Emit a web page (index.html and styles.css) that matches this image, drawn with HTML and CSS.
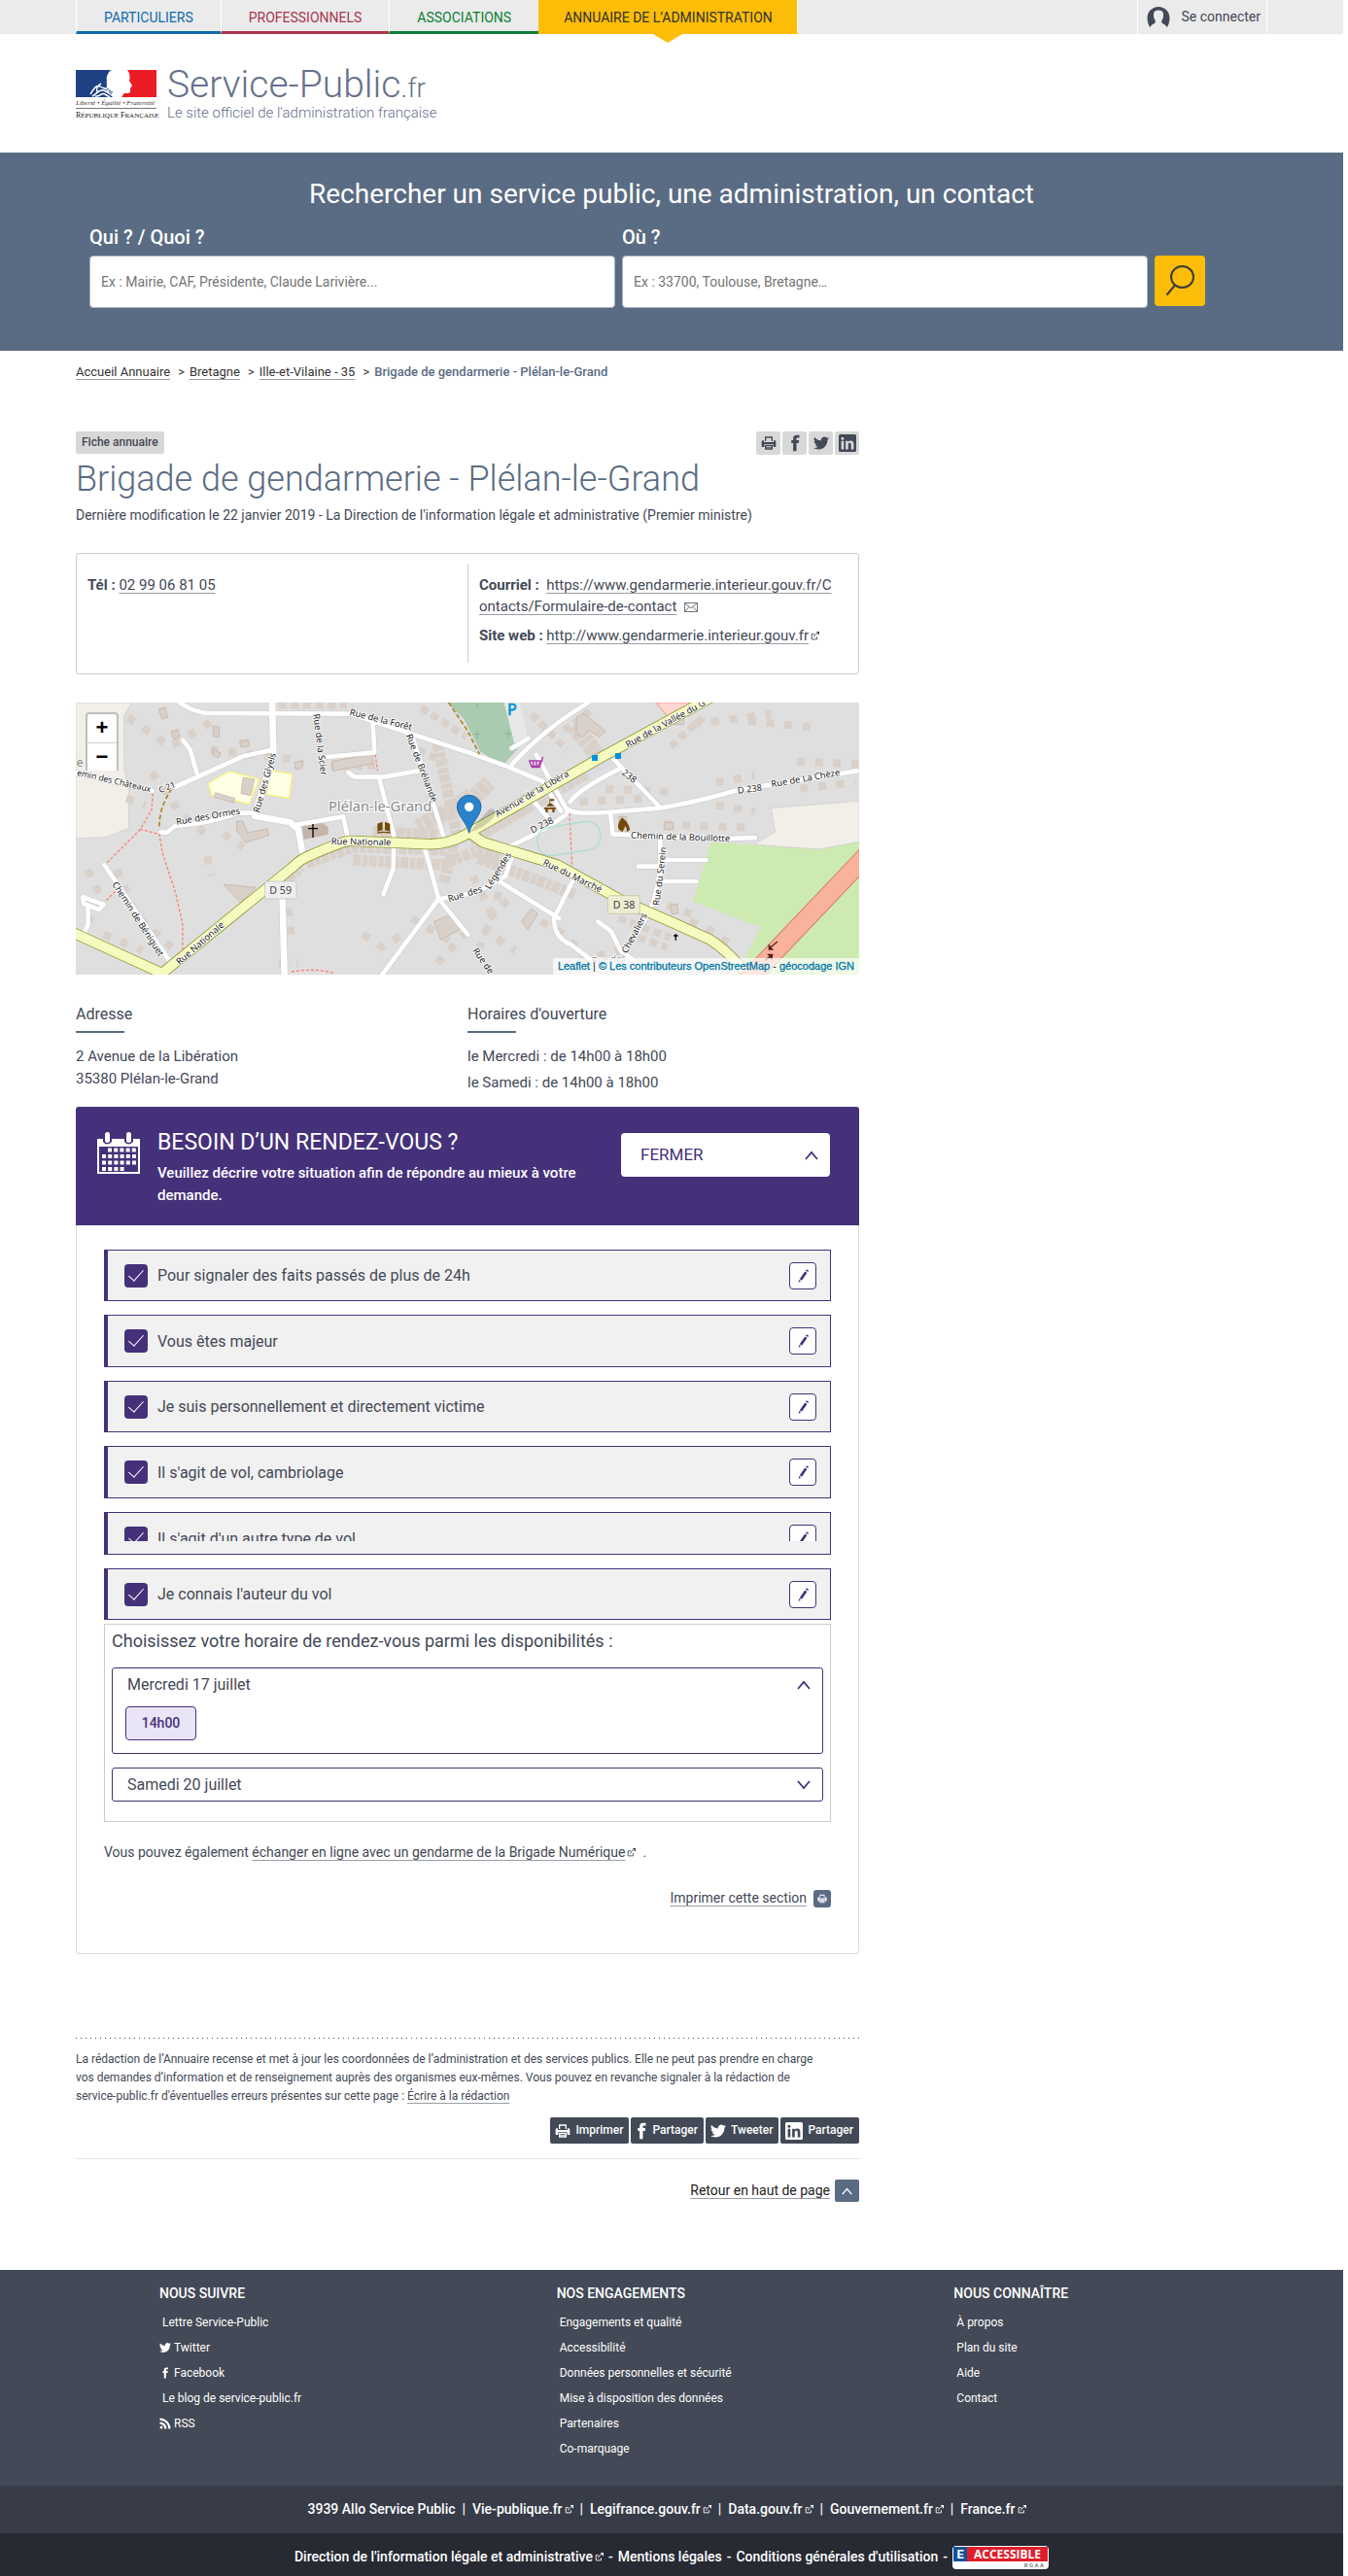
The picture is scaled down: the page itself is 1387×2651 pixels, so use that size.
FILE: index.html
```html
<!DOCTYPE html>
<html lang="fr">
<head>
<meta charset="utf-8">
<title>Brigade de gendarmerie - Plélan-le-Grand | Service-Public.fr</title>
<meta name="viewport" content="width=device-width, initial-scale=1">
<link rel="stylesheet" href="styles.css">
</head>
<body>
<svg class="sprite" aria-hidden="true">
  <symbol id="i-print" viewBox="0 0 24 24"><path fill-rule="evenodd" d="M6 9V2h12v7h-2V4H8v5zM3 8h1.500v2.500h15V8H21a2 2 0 0 1 2 2v8h-4v-4H5v4H1v-8a2 2 0 0 1 2-2zM6 15h12v7H6zm2 1.500v1h8v-1zm0 2.500v1h8v-1z"/></symbol>
  <symbol id="i-fb" viewBox="0 0 24 24"><path d="M14 8V6c0-.9.2-1.400 1.400-1.400H18V1h-3.700C10.800 1 9.500 2.800 9.500 5.700V8H7v4h2.500v11H14V12h3l.5-4z"/></symbol>
  <symbol id="i-tw" viewBox="0 0 24 24"><path d="M23.950 4.570a10 10 0 0 1-2.820.77 4.960 4.960 0 0 0 2.160-2.720c-.95.55-2 .95-3.120 1.180a4.920 4.920 0 0 0-8.380 4.480C7.690 8.100 4.070 6.130 1.640 3.160a4.920 4.920 0 0 0 1.520 6.570 4.900 4.900 0 0 1-2.230-.61v.06a4.920 4.920 0 0 0 3.950 4.830 5 5 0 0 1-2.210.08 4.940 4.940 0 0 0 4.600 3.420A9.870 9.870 0 0 1 0 19.540a13.990 13.990 0 0 0 7.550 2.210c9.050 0 14-7.500 14-13.980 0-.21 0-.42-.02-.63a9.940 9.940 0 0 0 2.460-2.550z"/></symbol>
  <symbol id="i-in" viewBox="0 0 24 24"><path fill-rule="evenodd" d="M2 0h20a2 2 0 0 1 2 2v20a2 2 0 0 1-2 2H2a2 2 0 0 1-2-2V2a2 2 0 0 1 2-2zM3.500 9v11.500H7V9zM5.250 3.500a2 2 0 1 0 0 4 2 2 0 0 0 0-4zM9.500 9v11.500H13V14c0-3 4-3.200 4 0v6.500h3.500V13c0-5-5.500-5.300-7.500-2.400V9z"/></symbol>
  <symbol id="i-rss" viewBox="0 0 24 24"><path d="M1 1v4.500c10 0 17.500 7.500 17.500 17.500H23C23 11 13 1 1 1zm0 8v4.500c5.500 0 9.500 4 9.500 9.500H15C15 15 9 9 1 9z"/><circle cx="4" cy="20" r="3"/></symbol>
  <symbol id="i-ext" viewBox="0 0 12 12"><path fill="none" stroke="currentColor" stroke-width="1.200" d="M5 3.500H1.600v7h7V7M5 7.500c0-3 2-4.500 4-4.500"/><path d="M7.500 0H12v5z"/></symbol>
  <symbol id="i-up" viewBox="0 0 14 10"><path fill="none" stroke="currentColor" stroke-width="1.800" d="M1 9l6-7 6 7"/></symbol>
  <symbol id="i-down" viewBox="0 0 14 10"><path fill="none" stroke="currentColor" stroke-width="1.800" d="M1 1l6 7 6-7"/></symbol>
  <symbol id="i-pen" viewBox="0 0 16 16"><path d="M10.200 3.600l2.200 1.500-5.400 7.600-2.200-1.500zM11 2.500l.9-1.300 2.200 1.500-.9 1.300zM4.300 12l1.700 1.200-2.400 1.700z"/></symbol>
</svg>

<div class="topbar">
  <div class="wrap topbar-in">
    <nav class="tabs" aria-label="Espaces">
      <a class="tab blue" href="#">PARTICULIERS</a>
      <a class="tab red" href="#">PROFESSIONNELS</a>
      <a class="tab green" href="#">ASSOCIATIONS</a>
      <a class="tab current" href="#">ANNUAIRE DE L’ADMINISTRATION</a>
    </nav>
    <a class="login" href="#"><svg width="24" height="22" viewBox="0 0 24 22" aria-hidden="true"><path fill-rule="evenodd" d="M12 0C5.500 0 .5 5 .5 11.500c0 3.800 1 7 3 10 0-2.500 2.500-3.300 5.200-5V14C7 12 7 9.500 7 7.500 7 5 9 3.500 12 3.500S17 5 17 7.500s0 4.500-1.700 6.500v2.500c2.700 1.700 5.200 2.500 5.200 5 2-3 3-6.200 3-10C23.500 5 18.500 0 12 0z"/></svg>Se connecter</a>
  </div>
</div>

<header class="wrap brand">
  <svg width="84" height="52" viewBox="0 0 84 52" role="img" aria-label="République Française">
    <path fill="#1f4283" d="M0 0h36c-3 3-5 7-4 11-1 3 1 5-1 8 2 1 1 4 3 5l4 4H0z"/>
    <path fill="#ec1c27" d="M53 0h30v28H47c2-2 1-4 5-4 5 0 4-2 4-5l2-3-3-5c1-3 1-7-2-11z"/>
    <path fill="none" stroke="#fff" stroke-width="1.500" d="M15 25c4-7 7-10 10-8s7 2 12 5M17 27c5-3 8-8 12-6l9 5M20 27c5 1 6-4 10-2l5 3M26 14c-4 2-5 6-4 9"/>
    <path fill="none" stroke="#1f4283" d="M32 19c2 1 3 3 6 4M34 22l3 3"/>
    <path fill="none" stroke="#777" d="M0 39.500h83"/>
    <text class="motto" x="0" y="36">Liberté • Égalité • Fraternité</text>
    <text class="rf" x="0" y="49"><tspan class="rf-cap">R</tspan>ÉPUBLIQUE <tspan class="rf-cap">F</tspan>RANÇAISE</text>
  </svg>
  <a class="brand-text" href="#"><span class="brand-name">Service-Public<small>.fr</small></span><span class="brand-tag">Le site officiel de l'administration française</span></a>
</header>

<section class="search">
  <form class="wrap search-in">
    <h2>Rechercher un service public, une administration, un contact</h2>
    <div class="fields">
      <div class="field"><label for="who">Qui ? / Quoi ?</label><input id="who" type="text" placeholder="Ex : Mairie, CAF, Présidente, Claude Larivière..."></div>
      <div class="field"><label for="where">Où ?</label><input id="where" type="text" placeholder="Ex : 33700, Toulouse, Bretagne…"></div>
      <button class="go" type="button" aria-label="Rechercher"><svg width="30" height="32" viewBox="0 0 30 32" aria-hidden="true"><ellipse cx="17.500" cy="12" rx="11.500" ry="11" /><path d="M10 20.500L1.500 30.500"/></svg></button>
    </div>
  </form>
</section>

<div class="wrap">
  <nav class="crumbs" aria-label="Fil d’Ariane"><a href="#">Accueil Annuaire</a><span>&gt;</span><a href="#">Bretagne</a><span>&gt;</span><a href="#">Ille-et-Vilaine - 35</a><span>&gt;</span><strong>Brigade de gendarmerie - Plélan-le-Grand</strong></nav>

  <main class="main">
    <div class="tools">
      <span class="badge">Fiche annuaire</span>
      <div class="icons">
        <button type="button" aria-label="Imprimer"><svg class="s16"><use href="#i-print"/></svg></button>
        <button type="button" aria-label="Facebook"><svg class="s18"><use href="#i-fb"/></svg></button>
        <button type="button" aria-label="Twitter"><svg class="s16"><use href="#i-tw"/></svg></button>
        <button type="button" aria-label="LinkedIn"><svg class="s18"><use href="#i-in"/></svg></button>
      </div>
    </div>
    <h1>Brigade de gendarmerie - Plélan-le-Grand</h1>
    <p class="updated">Dernière modification le 22 janvier 2019 - La Direction de l'information légale et administrative (Premier ministre)</p>

    <section class="contact">
      <div><p><b>Tél :</b> <a href="#">02 99 06 81 05</a></p></div>
      <div>
        <p><b>Courriel :</b>&nbsp; <a class="url" href="#">https://www.gendarmerie.interieur.gouv.fr/Contacts/Formulaire-de-contact</a>&nbsp; <svg class="mail" width="14" height="10" viewBox="0 0 14 10" aria-hidden="true"><path d="M.5.500h13v9H.5zl6.500 5.500L13.500.500M.5 9.500L5 4.500M13.500 9.500L9 4.500"/></svg></p>
        <p><b>Site web :</b> <a href="#">http://www.gendarmerie.interieur.gouv.fr</a><svg class="ext"><use href="#i-ext"/></svg></p>
      </div>
    </section>

    <div class="map">
      <svg class="map-art" viewBox="24 24 2418 840" preserveAspectRatio="xMidYMid slice" role="img" aria-label="Carte de Plélan-le-Grand">
        <rect x="24" y="24" width="2418" height="840" fill="#dfdfdf"/>
        <path fill="#f2efe9" stroke="#ccc" stroke-width="2" d="M24 24h172l-24 42 2 168 14 60v118l-74 28-90 4z"/>
        <path fill="#ffffe5" stroke="#f5f080" stroke-width="4" d="M432 273l66-37 92 24-30 78-117-26zM624 234l68 10-9 76-70-12z"/>
        <path fill="#aacbaf" d="M1170 24h176l42 143-46 51-70-44-50-100z"/>
        <path fill="#e8e8e8" d="M1346 24h46l18 60 10 60-18 18-24-10z"/>
        <path fill="#cdebb0" d="M1985 455l340 22 117-24v411h-380l78-146-210-80z"/>
        <path fill="#f2efe9" stroke="#ccc" stroke-width="2" d="M2170 350l272-22v126l-125 23-200-15 66-38z"/>
        <path fill="#ffd6d1" stroke="#f5aca6" stroke-width="4" d="M1815 24l40 48 90-48z"/>
        <path fill="#dadbe4" d="M1110 478l180-65 420-240 8 18-420 245-180 65z"/>
        <g fill="none" stroke="#d9d0c9" stroke-width="34">
          <path stroke-dasharray="24 5 16 4" d="M735 520l150-50 280 10M880 510l275 15 120-50M1240 450l100-55 260-150M1265 505l170 62 130 50M1160 580l30-120M1140 150l60 280M640 600l80-70"/>
          <path stroke-dasharray="18 4 26 3" stroke-width="50" d="M1080 410l110-60 55-40M1220 350l80-80M1560 95l90 110M1300 400l110-60M940 430l200 10M1265 480l70 30"/>
          <path stroke-dasharray="24 14" stroke-width="22" d="M650 32h210M1430 60l110 110M1530 110l80-60M1760 750l90 30M1700 690l160 60M1860 160l100-90M1080 170l90 40M810 220h140M1090 40l140 90"/>
        </g>
        <g fill="none" stroke="#d9d0c9">
          <path stroke-width="24" stroke-dasharray="24 32" d="M185 70l130 90 150-90M440 170l260 30M260 240l90 130 90 70M180 320l60 20M150 540l60 140 110 100M60 540l50 100-50 60M110 740l120 50M480 430l60 40M430 500l10 60M680 660l10 110M650 830h60M910 740l60 40 80-50M1060 690l120 70M1140 830l100-110M1250 560l60 120-40 100M1330 610l-40 120 90 60M1460 700l70 40 60 60M1580 820l120-30M1580 330l200-10M1660 290l220 10M1840 400l250 10M2000 340l120 20M2000 270l120-20M2260 290l170-20M2250 205l190 10M1930 90l240-30M2100 80l190 20M1850 650l80 30M1920 700l50 20 90 60M1300 690l60-60"/>
        </g>
        <path fill="#d9d0c9" stroke="#bfaea0" stroke-width="2" d="M280 45l20-7 8 32-18 5zM318 115l20-8 8 22-20 8zM448 96l18 3 0 32-18-2zM448 168l24 12-8 14-18-8zM530 142l26-3 4 20-26 3zM698 208l28-5-4 24-20 4zM540 255l36 6-12 50-30-6zM455 302l60 18-4 14-60-18zM520 390l20 0 14 36 60-12 6 20-72 22-28-38zM480 585l100 10-48 46zM815 205l125-22 2 30-124 22zM1570 68l24-10 66 56-20 16-32-20-20 20-20-10zM1870 66h30v26h-30zM1860 650l20-4 4 28-20 4zM1400 700l30-40 20 15-30 50zM1130 700l60-25 20 50-60 30zM1700 376h24v48h-24zM1840 394h28v22h-28z"/>
        <path fill="#c4b5ab" d="M722 400l60-8 22 18-2 22-76 15z"/>
        <g fill="none" stroke="#c7c7c7" stroke-linejoin="round" stroke-linecap="round">
          <path stroke-width="23" d="M630 24l4 160-58 190M576 374l110 20 24 20 14 74M662 630l6 240"/>
          <path stroke-width="17" d="M344 24q50 32 90 33l440 2 370 122 110 40 110 46 58 92M330 285l210-95 90-20M260 297l-236-56M285 425h20l26-20q120-10 190-40h55M355 140l22 30 20 70M940 70l6 110M796 192l150-14M710 400l140-24 12 60M1060 120l100 320M960 255l46 180-2 100-30 80M865 240l20 14 90 0 110-20M1100 470l44 160 90 110M1144 630l-175 235M112 525l210 310M45 625l65 22-14 16-48-18zM62 650v60l-15 30"/>
          <path stroke-width="17" d="M1370 215q100-110 235-190M1370 165l50-30M1360 470q110-50 185-105l-100-180M1430 320l60 70M1545 355q20 15 120 8l160-13q100-15 240-55l370-60M1685 200l140 145M1550 330q30-40 150-100M1675 370l6 60 330 15 110-4M1828 445v60q0 90-36 170l-30 50M1840 510h130M1760 530h68M1840 576h100M1330 575l185 115M1560 570l-60 120q0 60 50 80l80 60M1636 700l40 30 30 60 110 80M1370 500l-20 60-90 50-110 20"/>
        </g>
        <g fill="none" stroke="#fff" stroke-linejoin="round" stroke-linecap="round">
          <path stroke-width="20" d="M630 24l4 160-58 190M576 374l110 20 24 20 14 74M662 630l6 240"/>
          <path stroke-width="14" d="M344 24q50 32 90 33l440 2 370 122 110 40 110 46 58 92M330 285l210-95 90-20M260 297l-236-56M285 425h20l26-20q120-10 190-40h55M355 140l22 30 20 70M940 70l6 110M796 192l150-14M710 400l140-24 12 60M1060 120l100 320M960 255l46 180-2 100-30 80M865 240l20 14 90 0 110-20M1100 470l44 160 90 110M1144 630l-175 235M112 525l210 310M45 625l65 22-14 16-48-18zM62 650v60l-15 30"/>
          <path stroke-width="14" d="M1370 215q100-110 235-190M1370 165l50-30M1360 470q110-50 185-105l-100-180M1430 320l60 70M1545 355q20 15 120 8l160-13q100-15 240-55l370-60M1685 200l140 145M1550 330q30-40 150-100M1675 370l6 60 330 15 110-4M1828 445v60q0 90-36 170l-30 50M1840 510h130M1760 530h68M1840 576h100M1330 575l185 115M1560 570l-60 120q0 60 50 80l80 60M1636 700l40 30 30 60 110 80M1370 500l-20 60-90 50-110 20"/>
        </g>
        <g fill="none" stroke-linejoin="round">
          <path stroke="#8f9a3a" stroke-width="34" d="M10 732l280 128 400-325q30-30 60-40 90-40 120-44l240 10q60 2 110-25l430-245L2000 0M1238 425l42 30 230 70 200 110 160 70 110 50q50 30 110 100"/>
          <path stroke="#f7fabf" stroke-width="29" d="M10 732l280 128 400-325q30-30 60-40 90-40 120-44l240 10q60 2 110-25l430-245L2000 0M1238 425l42 30 230 70 200 110 160 70 110 50q50 30 110 100"/>
          <path stroke="#d97a68" stroke-width="60" d="M2470 490l-380 400"/><path stroke="#f9b29c" stroke-width="54" d="M2470 490l-380 400"/>
          <path stroke="#fa8072" stroke-width="4" stroke-dasharray="9 6" d="M262 305l-4 50-36 62-106 106M222 415l60 16 10 60 40 120 22 100v85M118 635l30-30M948 185l8 50M1548 365l8 170M690 855q70-12 130 4"/>
          <path stroke="#ac8327" stroke-width="5" stroke-dasharray="14 8" d="M320 290q-40 60-38 120M1175 24l60 90 35 70"/>
          <rect x="1448" y="400" width="196" height="88" rx="40" transform="rotate(-9 1546 444)" stroke="#b0ddcf" stroke-width="4"/>
        </g>
        <g class="roads">
          <text class="tight" transform="translate(26 248) rotate(13)">emin des Châteaux</text><text class="tight" transform="translate(284 304) rotate(-22)">C 21</text>
          <text transform="translate(335 402) rotate(-10)">Rue des Ormes</text><text transform="translate(590 365) rotate(-74)">Rue des Glyels</text>
          <text transform="translate(135 585) rotate(57)">Chemin de Béniguet</text><text transform="translate(344 835) rotate(-41)">Rue Nationale</text>
          <text transform="translate(812 462) rotate(1)">Rue Nationale</text><text transform="translate(868 62) rotate(14)">Rue de la Forêt</text>
          <text transform="translate(757 60) rotate(83)">Rue de la Scier</text><text transform="translate(1043 125) rotate(69)">Rue de Bréliande</text>
          <text transform="translate(1325 378) rotate(-30)">Avenue de la Libéra</text><text transform="translate(1728 164) rotate(-29)">Rue de la Vallée du G</text>
          <text transform="translate(1708 244) rotate(38)">238</text><text transform="translate(1433 428) rotate(-27)">D 238</text>
          <text transform="translate(2068 305) rotate(-7)">D 238</text><text transform="translate(2172 286) rotate(-10)">Rue de La Chèze</text>
          <text transform="translate(1737 443) rotate(2)">Chemin de la Bouillotte</text><text transform="translate(1464 524) rotate(26)">Rue du Marché</text>
          <text transform="translate(1825 652) rotate(-83)">Rue du Serein</text><text transform="translate(1725 800) rotate(-62)">Chevaliers</text>
          <text class="faint" transform="translate(1618 830) rotate(-4)">Rue des</text><text transform="translate(1236 622) rotate(-18)">des</text>
          <text transform="translate(1302 602) rotate(-58)">Légendes</text><text transform="translate(1176 640) rotate(-17)">Rue</text><text transform="translate(1248 790) rotate(55)">Rue de</text>
        </g>
        <text class="town" x="804" y="360">Plélan-le-Grand</text>
        <text class="remnant" x="26" y="222">e</text>
        <g class="plate"><rect x="608" y="576" width="97" height="54" rx="6" fill="#eeeef0" stroke="#bbb" stroke-width="2"/><text x="656" y="615">D 59</text>
          <rect x="1666" y="620" width="99" height="56" rx="6" fill="#ecedd3" stroke="#bcbd9b" stroke-width="2"/><text x="1716" y="660">D 38</text></g>
        <path stroke="#000" stroke-width="4" d="M756 399v42M741 413h30M1876 738v20M1869 744h14"/>
        <path fill="#734a08" d="M955 398l16-6v26l-16 4zM994 398l-16-6v26l16 4zM955 424l20-2 20 2v4l-20-2-20 2zM1470 348h36v5h-36zM1476 344l12-11 14 11zM1474 353h7v10h-7zM1495 353h7v10h-7zM1486 322h2v12h-2zM1488 322h13v6h-13zM1710 379q16 12 22 28 6 14-8 16 4-8-4-18-4 10-8 18-16-6-14-20 2-12 12-24z"/>
        <path fill="none" stroke="#ac39ac" stroke-width="4" d="M1424 204h34l-6 16h-22zM1466 192l-10 32h-26M1436 204v16M1446 204v16"/><circle cx="1434" cy="222" r="3" fill="#ac39ac"/><circle cx="1452" cy="222" r="3" fill="#ac39ac"/>
        <path fill="#0092da" d="M1617 186h18v18h-18zM1689 180h18v18h-18z"/><text class="park" x="1356" y="64">P</text>
        <path stroke="#8dbb98" stroke-width="4" d="M1263 112v24M1253 122h20M1359 110v24M1349 120h20M1263 24v14"/>
        <path stroke="#541f16" stroke-width="4" fill="#541f16" d="M2190 762l-22 18m-4-6v12h10zM2152 820l20-16m-10-2h12l-2 12z"/>
        <path fill="#555" opacity=".25" d="M1238 425l60-70q24-10 20 18-30 40-80 52z"/>
        <path fill="#2b82cb" stroke="#1f69a8" stroke-width="3" d="M1238 427c-6-32-37-54-37-82a37 35 0 0 1 74 0c0 28-31 50-37 82z"/><circle cx="1238" cy="346" r="14" fill="#fff"/>
      </svg>
      <div class="zoomer"><button type="button" aria-label="Zoom avant">+</button><button type="button" aria-label="Zoom arrière">−</button></div>
      <div class="credit"><a href="#">Leaflet</a> | <a href="#">© Les contributeurs OpenStreetMap</a> - <a href="#">géocodage IGN</a></div>
    </div>

    <div class="infos">
      <section><h2>Adresse</h2><p>2 Avenue de la Libération<br>35380 Plélan-le-Grand</p></section>
      <section class="hours"><h2>Horaires d'ouverture</h2><p>le Mercredi : de 14h00 à 18h00</p><p>le Samedi : de 14h00 à 18h00</p></section>
    </div>

    <section class="rdv">
      <header class="rdv-head">
        <svg width="44" height="44" viewBox="0 0 44 44" aria-hidden="true"><path fill="#fff" fill-rule="evenodd" d="M0 8h6v3q4 5 9 0V8h13v3q4 5 9 0V8h7v36H0zm2 8v26h40V16z"/><rect fill="#fff" x="8" y="1" width="5" height="11" rx="2.500"/><rect fill="#fff" x="30" y="1" width="5" height="11" rx="2.500"/><g stroke="#fff" stroke-width="4"><path stroke-dasharray="4 2.200" d="M11 19.500h29"/><path stroke-dasharray="4 2.200" d="M5 26h35M5 32.500h35M5 39h24"/></g></svg>
        <div class="rdv-title"><h2>BESOIN D’UN RENDEZ-VOUS ?</h2><p>Veuillez décrire votre situation afin de répondre au mieux à votre demande.</p></div>
        <button class="close" type="button">FERMER<svg class="chev"><use href="#i-up"/></svg></button>
      </header>
      <div class="rdv-body">
        <ul class="answers">
          <li><label><input type="checkbox" checked>Pour signaler des faits passés de plus de 24h</label><button type="button" aria-label="Modifier"><svg class="pen"><use href="#i-pen"/></svg></button></li>
          <li><label><input type="checkbox" checked>Vous êtes majeur</label><button type="button" aria-label="Modifier"><svg class="pen"><use href="#i-pen"/></svg></button></li>
          <li><label><input type="checkbox" checked>Je suis personnellement et directement victime</label><button type="button" aria-label="Modifier"><svg class="pen"><use href="#i-pen"/></svg></button></li>
          <li><label><input type="checkbox" checked>Il s'agit de vol, cambriolage</label><button type="button" aria-label="Modifier"><svg class="pen"><use href="#i-pen"/></svg></button></li>
          <li class="folding"><div class="fold"><label><input type="checkbox" checked>Il s'agit d'un autre type de vol</label><button type="button" aria-label="Modifier"><svg class="pen"><use href="#i-pen"/></svg></button></div></li>
          <li><label><input type="checkbox" checked>Je connais l'auteur du vol</label><button type="button" aria-label="Modifier"><svg class="pen"><use href="#i-pen"/></svg></button></li>
        </ul>
        <section class="slots">
          <h3>Choisissez votre horaire de rendez-vous parmi les disponibilités :</h3>
          <div class="day open"><button class="day-head" type="button">Mercredi 17 juillet<svg class="chev"><use href="#i-up"/></svg></button><button class="slot" type="button">14h00</button></div>
          <div class="day"><button class="day-head" type="button">Samedi 20 juillet<svg class="chev"><use href="#i-down"/></svg></button></div>
        </section>
        <p class="also">Vous pouvez également <a href="#">échanger en ligne avec un gendarme de la Brigade Numérique</a><svg class="ext"><use href="#i-ext"/></svg>&nbsp; .</p>
        <p class="print"><a href="#">Imprimer cette section</a><span class="print-ico"><svg class="s10"><use href="#i-print"/></svg></span></p>
      </div>
    </section>

    <p class="notice">La rédaction de l’Annuaire recense et met à jour les coordonnées de l’administration et des services publics. Elle ne peut pas prendre en charge<br>vos demandes d’information et de renseignement auprès des organismes eux-mêmes. Vous pouvez en revanche signaler à la rédaction de<br>service-public.fr d'éventuelles erreurs présentes sur cette page : <a href="#">Écrire à la rédaction</a></p>
    <div class="share">
      <button type="button"><svg class="s16"><use href="#i-print"/></svg>Imprimer</button>
      <button type="button"><svg class="s18 slim"><use href="#i-fb"/></svg>Partager</button>
      <button type="button"><svg class="s16"><use href="#i-tw"/></svg>Tweeter</button>
      <button type="button"><svg class="s18"><use href="#i-in"/></svg>Partager</button>
    </div>
    <p class="top"><a href="#">Retour en haut de page</a><a class="top-ico" href="#" aria-label="Haut de page"><svg class="chev small"><use href="#i-up"/></svg></a></p>
  </main>
</div>

<footer class="footer">
  <div class="wrap cols">
    <section><h2>NOUS SUIVRE</h2><ul><li><a href="#">Lettre Service-Public</a></li><li><a class="with-ico" href="#"><svg class="s12"><use href="#i-tw"/></svg>Twitter</a></li><li><a class="with-ico" href="#"><svg class="s12"><use href="#i-fb"/></svg>Facebook</a></li><li><a href="#">Le blog de service-public.fr</a></li><li><a class="with-ico" href="#"><svg class="s12"><use href="#i-rss"/></svg>RSS</a></li></ul></section>
    <section><h2>NOS ENGAGEMENTS</h2><ul><li><a href="#">Engagements et qualité</a></li><li><a href="#">Accessibilité</a></li><li><a href="#">Données personnelles et sécurité</a></li><li><a href="#">Mise à disposition des données</a></li><li><a href="#">Partenaires</a></li><li><a href="#">Co-marquage</a></li></ul></section>
    <section><h2>NOUS CONNAÎTRE</h2><ul><li><a href="#">À propos</a></li><li><a href="#">Plan du site</a></li><li><a href="#">Aide</a></li><li><a href="#">Contact</a></li></ul></section>
  </div>
  <div class="bar partners">
    <a href="#">3939 Allo Service Public</a><i>|</i><a href="#">Vie-publique.fr<svg class="ext"><use href="#i-ext"/></svg></a><i>|</i><a href="#">Legifrance.gouv.fr<svg class="ext"><use href="#i-ext"/></svg></a><i>|</i><a href="#">Data.gouv.fr<svg class="ext"><use href="#i-ext"/></svg></a><i>|</i><a href="#">Gouvernement.fr<svg class="ext"><use href="#i-ext"/></svg></a><i>|</i><a href="#">France.fr<svg class="ext"><use href="#i-ext"/></svg></a>
  </div>
  <div class="bar legal">
    <a href="#">Direction de l'information légale et administrative<svg class="ext"><use href="#i-ext"/></svg></a><i>-</i><a href="#">Mentions légales</a><i>-</i><a href="#">Conditions générales d'utilisation</a><i>-</i><a class="rgaa" href="#"><span class="rgaa-top"><b>E</b><strong>ACCESSIBLE</strong></span><small>R G A A</small></a>
  </div>
</footer>
</body>
</html>
```
FILE: styles.css
```css
*, *::before, *::after { box-sizing: border-box; }
:root {
  --ink: #434956;
  --slate: #5a6c83;
  --violet: #45317a;
  --yellow: #fbbd07;
}
body { margin: 0 5px 0 0; font-family: Roboto, "Liberation Sans", sans-serif; font-size: 15px; line-height: 23px; color: var(--ink); background: #fff; }
h1, h2, h3, p, ul { margin: 0; padding: 0; font-weight: 400; }
ul { list-style: none; }
a { color: inherit; text-underline-offset: 3px; text-decoration-color: #9a9da5; }
button { font: inherit; color: inherit; cursor: pointer; padding: 0; border: 0; background: none; }
svg { fill: currentColor; flex: none; }
b { font-weight: 700; }
.sprite { display: none; }
.wrap { max-width: 1226px; margin: 0 auto; }
.s10 { width: 10px; height: 10px; }
.s12 { width: 12px; height: 12px; }
.s16 { width: 16px; height: 16px; }
.s18 { width: 18px; height: 18px; }
.slim { margin: 0 -3px; }
.ext { width: 9px; height: 9px; margin-left: 2px; }
.chev { width: 14px; height: 10px; }
.chev.small { width: 11px; height: 8px; }

/* Top bar */
.topbar { background: #ebebeb; }
.topbar-in { display: flex; justify-content: space-between; height: 35px; }
.tabs { display: flex; }
.tab { display: flex; align-items: center; padding: 3px 28px 0; border-left: 1px solid #fff; border-bottom: 3px solid; text-decoration: none; font-size: 14px; line-height: 20px; }
.blue { color: #0f6bac; }
.red { color: #a9374f; }
.green { color: #0d7f36; }
.tab.current { position: relative; padding: 3px 25px 0; color: #333; background: var(--yellow); border-color: var(--yellow); border-right: 1px solid #fff; }
.tab.current::after { content: ""; position: absolute; top: 34px; left: calc(50% - 17px); border: 17px solid transparent; border-bottom: 0; border-top: 10px solid var(--yellow); }
.login { display: flex; align-items: center; gap: 12px; padding: 0 6px 0 9px; border: solid #fff; border-width: 0 1px; font-size: 14px; text-decoration: none; }

/* Brand */
.brand { display: flex; gap: 10px; height: 122px; padding-top: 37px; }
.brand > svg { overflow: visible; }
.brand-text { display: flex; flex-direction: column; margin-top: -5px; color: #66718c; text-decoration: none; font-weight: 300; }
.brand-name { font-size: 39px; line-height: 40px; }
.brand-name small { font-size: 28px; }
.brand-tag { margin-top: -5px; font-size: 15px; line-height: 20px; }
.motto { font: italic 7px "Liberation Serif", serif; fill: #333; }
.rf { font: 7px "Liberation Serif", serif; fill: #222; }
.rf-cap { font-size: 8px; }

/* Search */
.search { background: var(--slate); color: #fff; padding: 26px 0 44px; }
.search h2 { font-size: 28px; line-height: 34px; text-align: center; }
.fields { display: grid; grid-template-columns: 1fr 1fr 52px; gap: 7px; padding: 15px 64px 0 14px; align-items: end; }
.field label { display: block; font-size: 20px; line-height: 24px; font-weight: 500; margin-bottom: 7px; }
.field input { display: block; width: 100%; height: 54px; padding: 0 11px; border: 1px solid #a9b3c4; border-radius: 4px; font: 14px Roboto, sans-serif; }
.field input::placeholder { color: #757575; }
.go { height: 52px; margin-bottom: 2px; background: var(--yellow); border-radius: 4px; display: grid; place-items: center; }
.go svg { fill: none; stroke: #3c3c3c; stroke-width: 2; }

/* Breadcrumb */
.crumbs { padding-top: 12px; font-size: 13px; line-height: 20px; color: #333; }
.crumbs span { margin: 0 5px 0 8px; }
.crumbs strong { font-weight: 500; color: var(--slate); }

/* Record */
.main { width: 66%; max-width: 806px; margin-top: 51px; }
.tools { display: flex; justify-content: space-between; align-items: flex-start; height: 24px; }
.badge { padding: 0 6px; background: #d8d8d8; border-radius: 2px; font-size: 12px; line-height: 23px; font-weight: 500; }
.icons { display: flex; gap: 2px; }
.icons button { width: 25px; height: 24px; background: #d8d8d8; border-radius: 2px; display: grid; place-items: center; }
h1 { margin-top: 3px; font-size: 36px; line-height: 44px; font-weight: 300; color: var(--slate); }
.updated { margin-top: 5px; font-size: 14px; line-height: 20px; }
.contact { margin-top: 29px; padding: 10px 0 11px; border: 1px solid #ccc; border-radius: 3px; display: grid; grid-template-columns: 1fr 1fr; line-height: 22px; }
.contact > div { min-height: 102px; padding: 11px 24px 0 11px; }
.contact > div + div { border-left: 1px solid #ccc; }
.contact p + p { margin-top: 8px; }
.url { word-break: break-all; }
.mail { fill: none; stroke: #70747d; vertical-align: -1px; }

/* Map */
.map { position: relative; margin-top: 29px; height: 280px; overflow: hidden; }
.map-art { display: block; width: 100%; height: 100%; }
.roads text { font: 28px "Noto Sans", sans-serif; fill: #222; stroke: #fff; stroke-width: 5px; paint-order: stroke; stroke-linejoin: round; }
.roads .tight { font-size: 26px; }
.roads .faint { fill: #888; }
.town { font: 44px "Noto Sans", sans-serif; fill: #888; stroke: #fff; stroke-width: 6px; paint-order: stroke; }
.remnant { font: 36px "Noto Sans", sans-serif; fill: #888; }
.plate text { font: 32px "Noto Sans", sans-serif; fill: #444; text-anchor: middle; }
.park { font: 48px "Noto Sans", sans-serif; fill: #0092da; stroke: #0092da; stroke-width: 2px; }
.zoomer { position: absolute; left: 10px; top: 10px; width: 34px; height: 60px; border: 2px solid #bebebe; border-bottom: 0; border-radius: 4px 4px 0 0; background: #fff; display: flex; flex-direction: column; }
.zoomer button { flex: 1; font: 700 22px/28px "Liberation Sans", sans-serif; color: #000; }
.zoomer button + button { border-top: 1px solid #ccc; }
.credit { position: absolute; right: 0; bottom: 0; padding: 0 5px; background: rgba(255, 255, 255, .7); font: 11px/17px "Liberation Sans", sans-serif; color: #333; }
.credit a { color: #0078a8; text-decoration: none; -webkit-text-stroke: .3px #0078a8; }

/* Address and hours */
.infos { display: grid; grid-template-columns: 1fr 1fr; margin-top: 29px; }
.infos h2 { font-size: 16px; line-height: 24px; margin-bottom: 13px; }
.infos h2::after { content: ""; display: block; width: 50px; height: 2px; margin-top: 5px; background: var(--slate); }
.hours p + p { margin-top: 4px; }

/* Appointment */
.rdv { margin-top: 13px; }
.rdv-head { display: flex; align-items: flex-start; padding: 25px 30px 19px 22px; background: var(--violet); color: #fff; border-radius: 3px 3px 0 0; }
.rdv-title { flex: 1; margin-left: 18px; }
.rdv-title h2 { font-size: 23px; line-height: 24px; }
.rdv-title p { margin-top: 8px; font-weight: 500; max-width: 452px; }
.close { width: 215px; height: 45px; margin-top: 2px; padding: 0 12px 0 20px; background: #fff; border-radius: 4px; display: flex; align-items: center; justify-content: space-between; color: var(--violet); font-size: 17px; }
.rdv-body { border: solid #ddd; border-width: 0 1px 1px; border-radius: 0 0 3px 3px; padding: 25px 28px 45px; }
.answers { display: flex; flex-direction: column; gap: 14px; font-size: 16px; }
.answers li { padding: 0 14px 0 17px; min-height: 53px; border: 1px solid var(--violet); border-left-width: 4px; background: #f1f1f1; display: flex; align-items: center; justify-content: space-between; }
.answers li:nth-child(2), .answers li:nth-child(4) { min-height: 54px; }
.answers label { display: flex; align-items: center; gap: 10px; }
.answers input { appearance: none; width: 24px; height: 24px; margin: 0; border-radius: 4px; background: var(--violet); display: grid; justify-items: center; }
.answers input::after { content: ""; width: 8px; height: 15px; margin-top: 2px; border: solid #fff; border-width: 0 1px 1px 0; transform: rotate(42deg); }
.answers button { width: 28px; height: 28px; border: 1px solid var(--violet); border-radius: 4px; background: #fff; color: var(--violet); display: grid; place-items: center; }
.pen { width: 16px; height: 16px; }
.answers .folding { min-height: 44px; align-items: flex-start; padding-top: 12px; }
.fold { flex: 1; height: 17px; overflow: hidden; display: flex; justify-content: space-between; align-items: flex-start; }
.fold label { height: 28px; }
.slots { margin-top: 4px; padding: 6px 7px 20px; border: 1px solid #ccc; }
.slots h3 { font-size: 18px; line-height: 22px; margin-bottom: 16px; }
.day { border: 1px solid var(--violet); border-radius: 3px; }
.day + .day { margin-top: 14px; }
.day-head { width: 100%; height: 33px; padding: 0 12px 0 15px; display: flex; align-items: center; justify-content: space-between; font-size: 16px; }
.day-head .chev { color: var(--violet); }
.open { padding-bottom: 13px; }
.slot { display: block; width: 73px; height: 35px; margin: 6px 0 0 13px; border: 1px solid var(--violet); border-radius: 4px; background: #e9e4f6; color: var(--violet); font-size: 14px; font-weight: 500; }
.also { margin-top: 20px; font-size: 14px; }
.print { display: flex; justify-content: flex-end; align-items: center; gap: 7px; margin-top: 24px; font-size: 14px; }
.print-ico { width: 18px; height: 18px; border-radius: 3px; background: var(--slate); color: #fff; display: grid; place-items: center; }

/* Notice and sharing */
.notice { margin-top: 86px; padding-top: 13px; font-size: 12px; line-height: 19px; background: repeating-linear-gradient(90deg, var(--ink) 0 1px, transparent 1px 5px) 0 0 / 100% 1px no-repeat; }
.share { display: flex; justify-content: flex-end; gap: 2px; padding: 12px 0 15px; border-bottom: 1px solid #e2e2e2; }
.share button { display: flex; align-items: center; gap: 5px; height: 27px; padding: 0 6px 0 5px; background: var(--ink); color: #fff; border-radius: 2px; font-size: 12px; font-weight: 500; }
.top { display: flex; justify-content: flex-end; align-items: center; gap: 5px; margin: 21px 0 70px; font-size: 14px; color: #222; }
.top-ico { width: 25px; height: 23px; border-radius: 2px; background: var(--slate); color: #fff; display: grid; place-items: center; }

/* Footer */
.footer { background: var(--ink); color: #fff; }
.footer a { text-decoration: none; }
.cols { display: grid; grid-template-columns: repeat(3, 1fr); padding: 14px 0 25px; }
.cols section { padding-left: 86px; }
.cols h2 { font-size: 14px; line-height: 20px; font-weight: 500; margin-bottom: 7px; }
.cols li { font-size: 12px; line-height: 26px; padding-left: 3px; }
.with-ico { display: flex; align-items: center; gap: 3px; margin-left: -3px; }
.bar { display: flex; justify-content: center; align-items: center; font-size: 14px; font-weight: 500; }
.bar i { font-style: normal; margin: 0 7px; }
.partners { background: #373c48; min-height: 49px; padding-right: 10px; }
.legal { background: #272a33; min-height: 44px; padding-top: 5px; }
.legal i { margin: 0 5px; }
.rgaa { width: 99px; height: 24px; padding: 1px; background: #fff; border-radius: 4px; color: #666; display: flex; flex-direction: column; }
.rgaa-top { display: flex; height: 15px; line-height: 15px; color: #fff; font-size: 13px; }
.rgaa-top b { width: 14px; text-align: center; background: #174f9c; }
.rgaa-top strong { flex: 1; text-align: center; background: #e01e2b; font-family: "Open Sans", sans-serif; font-size: 12px; }
.rgaa small { font-size: 6px; line-height: 7px; text-align: right; padding-right: 4px; }
```
